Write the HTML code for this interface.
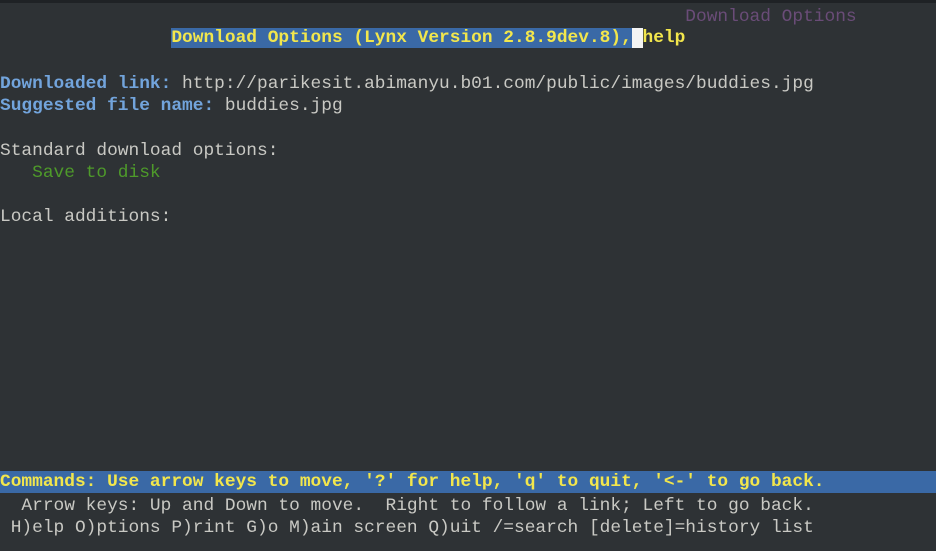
<!DOCTYPE html>
<html><head><style>
html,body{margin:0;padding:0}
body{width:936px;height:551px;background:#2e3235;overflow:hidden;position:relative;font-family:"Liberation Mono",monospace;font-size:17.85px;color:#c9c9c4}
.top{position:absolute;left:0;top:0;width:936px;height:3px;background:#1f2225}
.r{position:absolute;left:0;height:22.2px;line-height:22.2px;white-space:pre}
.y{color:#f2e64c;font-weight:bold}
.hl{background:#3a69a6}
.lb{color:#72a4dc;font-weight:bold}
.g{color:#4e9a2a}
.p{color:#6a4c78}
.cur{background:#f4f4f4;color:#f4f4f4}
</style></head><body>
<div class="top"></div>
<div class="r p" style="top:6px">                                                                Download Options</div>
<div class="r" style="top:27.2px">                <span class="y hl">Download Options (Lynx Version 2.8.9dev.8),</span><span class="cur"> </span><span class="y">help</span></div>
<div class="r" style="top:73px"><span class="lb">Downloaded link:</span> http://parikesit.abimanyu.b01.com/public/images/buddies.jpg</div>
<div class="r" style="top:95.2px"><span class="lb">Suggested file name:</span> buddies.jpg</div>
<div class="r" style="top:139.6px">Standard download options:</div>
<div class="r g" style="top:161.8px">   Save to disk</div>
<div class="r" style="top:206.2px">Local additions:</div>
<div class="r y hl" style="top:471.2px;width:936px">Commands: Use arrow keys to move, '?' for help, 'q' to quit, '&lt;-' to go back.</div>
<div class="r" style="top:494.6px">  Arrow keys: Up and Down to move.  Right to follow a link; Left to go back.</div>
<div class="r" style="top:516.8px"> H)elp O)ptions P)rint G)o M)ain screen Q)uit /=search [delete]=history list</div>
</body></html>
